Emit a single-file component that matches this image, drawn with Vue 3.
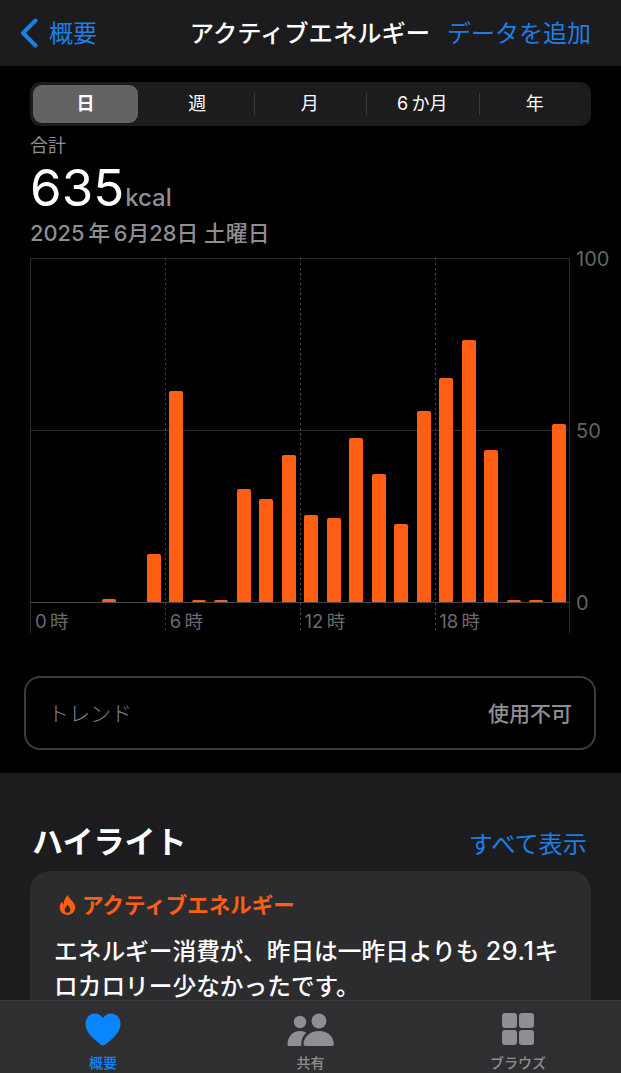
<template>
  <div class="screen">
    <header class="nav">
      <div class="nav_back">
        <svg class="chevron" width="18" height="30" viewBox="0 0 18 30">
          <path d="M15.5 2.5 3 15l12.5 12.5" fill="none" stroke="#1c7fe6" stroke-width="4" stroke-linecap="round" stroke-linejoin="round" />
        </svg>
        <span class="nav_text">概要</span>
      </div>
      <div class="nav_title nav_text">アクティブエネルギー</div>
      <div class="nav_action nav_text">データを追加</div>
    </header>

    <main class="summary">
      <div class="segment">
        <div v-for="(item, index) in ranges" :key="item" class="segment_item" :class="{ active: index === 0, split: index > 1 }">
          {{ item }}
        </div>
      </div>

      <div class="total_label">合計</div>
      <div class="total"><span class="total_num">635</span><span class="total_unit">kcal</span></div>
      <div class="total_date">{{ dateText }}</div>

      <div class="chart">
        <div class="plot">
          <div class="line_top"></div>
          <div class="line_mid"></div>
          <div class="line_base"></div>
          <div class="bars">
            <div v-for="(h, index) in bars" :key="index" class="bar_cell">
              <div v-if="h" class="bar" :style="{ height: h + 'px' }"></div>
            </div>
          </div>
          <div class="hours">
            <div v-for="item in hours" :key="item" class="hour">{{ item }}</div>
          </div>
        </div>
        <div class="axis">
          <span>100</span>
          <span>50</span>
          <span>0</span>
        </div>
      </div>

      <div class="trend">
        <span class="trend_name">トレンド</span>
        <span class="trend_value">使用不可</span>
      </div>
    </main>

    <section class="highlight">
      <div class="highlight_head">
        <h2>ハイライト</h2>
        <span>すべて表示</span>
      </div>
      <div class="card">
        <div class="card_title">
          <svg width="17" height="22" viewBox="0 0 18 22">
            <path fill-rule="evenodd" fill="#ff5f15" d="M9.5 0.5c0.6 3 2.4 4.2 4.6 6.6C16 9.200 17.200 11.200 17.200 13.500 17.200 18.200 13.600 21.500 9 21.500 4.400 21.500 0.800 18.300 0.800 13.700 0.800 11.200 1.800 9.200 3.300 7.400 3.500 8.900 4 9.900 4.900 10.500 5 6.800 6.500 3 9.500 0.500ZM9.100 10.500C8.500 12.200 6 13.700 6 16.200 6 18.100 7.300 19.300 9 19.300 10.700 19.300 12 18.100 12 16.200 12 13.800 10.100 12.600 9.100 10.500Z" />
          </svg>
          <span>アクティブエネルギー</span>
        </div>
        <p>エネルギー消費が、昨日は一昨日よりも <span class="card_num">29.1</span>キロカロリー少なかったです。</p>
      </div>
    </section>

    <nav class="tabs">
      <div class="tab on">
        <svg width="36" height="33" viewBox="0 0 36 33">
          <path fill="#0a84ff" d="M18 32.500C16.800 32.500 15.800 31.700 14 30.300 6.500 24.500 0.500 18.500 0.500 10.800 0.500 4.800 4.700 0.500 10 0.500 13.500 0.500 16.300 2.300 18 5.300 19.700 2.300 22.500 0.500 26 0.500 31.300 0.500 35.500 4.800 35.500 10.800 35.500 18.500 29.500 24.500 22 30.300 20.200 31.700 19.200 32.500 18 32.500Z" />
        </svg>
        <span>概要</span>
      </div>
      <div class="tab">
        <svg width="47" height="33" viewBox="0 0 47 33">
          <circle cx="13" cy="9" r="6.200" fill="#8e8e93" />
          <path fill="#8e8e93" d="M0.500 31.500C0.500 24 5.500 18 13 18 15.500 18 17.700 18.700 19.400 19.800 16.200 22.500 14.200 26.500 14.200 31.500 14.200 32.100 14.300 32.500 14.500 33L2 33C1 33 0.500 32.500 0.500 31.500Z" />
          <circle cx="32" cy="8" r="7.500" fill="#8e8e93" />
          <path fill="#8e8e93" d="M16.500 31C16.500 24 23 18 32 18 41 18 46.800 24 46.800 31 46.800 32.300 46 33 45 33L18.300 33C17.200 33 16.500 32.300 16.500 31Z" />
        </svg>
        <span>共有</span>
      </div>
      <div class="tab">
        <div class="grid_icon">
          <i></i><i></i><i></i><i></i>
        </div>
        <span>ブラウズ</span>
      </div>
    </nav>
  </div>
</template>

<script setup>
const ranges = ['日', '週', '月', '6\u2009か月', '年']
const hours = ['0\u2009時', '6\u2009時', '12\u2009時', '18\u2009時']
const dateText = '2025\u2009年\u20096月28日 土曜日'
// 各時間の棒の高さ(px)
const bars = [0, 0, 0, 3, 0, 48, 211, 2, 2, 113, 103, 147, 87, 84, 164, 128, 78, 191, 224, 262, 152, 2, 2, 178]
</script>

<style>
body {
  background: #000;
}
</style>

<style scoped>
.screen {
  position: relative;
  width: 621px;
  height: 1073px;
  overflow: hidden;
  background: #000;
  color: #fff;
  font-family: Inter, "Noto Sans CJK JP", sans-serif;
}

.nav {
  display: flex;
  align-items: center;
  height: 66px;
  padding: 0 30px 0 20px;
  background: #1c1c1e;
  font-size: 24px;
}

.nav_text {
  margin-bottom: 4px;
}

.nav_back {
  display: flex;
  align-items: center;
  gap: 11px;
  width: 171px;
  color: #1c7fe6;
}

.nav_title {
  width: 259px;
  font-size: 24.300px;
  font-weight: 500;
  white-space: nowrap;
}

.nav_action {
  color: #1c7fe6;
  white-space: nowrap;
}

.summary {
  box-sizing: border-box;
  height: 707px;
  padding: 16px 30px 0;
}

.segment {
  display: flex;
  box-sizing: border-box;
  height: 44px;
  padding: 3px 0 3px 3px;
  border-radius: 11px;
  background: #1c1c1e;
  font-size: 18px;
}

.segment_item {
  position: relative;
  flex: 1;
  line-height: 38px;
  text-align: center;
}

.segment_item.active {
  flex: none;
  width: 105px;
  margin-right: 3px;
  border-radius: 9px;
  background: #636366;
  font-weight: 600;
}

.segment_item.split::before {
  content: "";
  position: absolute;
  left: 0;
  top: 8px;
  height: 22px;
  width: 1px;
  background: #3a3a3c;
}

.total_label {
  margin-top: 9px;
  font-size: 18px;
  line-height: 22px;
  color: #8e8e93;
}

.total {
  display: flex;
  align-items: baseline;
  height: 52px;
  margin-top: 5px;
  line-height: 52px;
}

.total_num {
  font-size: 51px;
}

.total_unit {
  margin-left: 1px;
  font-size: 24px;
  font-weight: 500;
  color: #8e8e93;
}

.total_date {
  margin-top: 4px;
  font-size: 21.800px;
  line-height: 30px;
  font-weight: 500;
  color: #8e8e93;
}

.chart {
  display: flex;
  margin-top: 10px;
}

.plot {
  position: relative;
  box-sizing: border-box;
  width: 540px;
  height: 375px;
  border-left: 1px solid #2e2e30;
  border-right: 1px solid #2e2e30;
}

.line_top,
.line_mid,
.line_base {
  position: absolute;
  left: 0;
  right: 0;
  height: 1px;
  background: #2a2a2c;
}

.line_top {
  top: 0;
}

.line_mid {
  top: 172px;
}

.line_base {
  top: 344px;
  background: #48484a;
}

.bars {
  position: relative;
  display: grid;
  grid-template-columns: repeat(24, 22.500px);
  height: 344px;
  margin-left: -1px;
}

.bar_cell {
  position: relative;
  display: flex;
  align-items: flex-end;
  height: 100%;
  padding-left: 4px;
}

.bar_cell:nth-child(6n + 1)::before {
  content: "";
  position: absolute;
  left: 0;
  top: 0;
  bottom: -31px;
  width: 1px;
  background-image: repeating-linear-gradient(to bottom, #48484a 0 2px, transparent 2px 5px);
}

.bar_cell:first-child::before {
  display: none;
}

.bar {
  width: 14px;
  border-radius: 2px 2px 0 0;
  background: #ff5f15;
}

.hours {
  display: flex;
  margin-left: -1px;
  padding-top: 8px;
}

.hour {
  box-sizing: border-box;
  width: 135px;
  padding-left: 5px;
  font-size: 18.500px;
  line-height: 23px;
  color: #6a6a6e;
}

.axis {
  display: flex;
  flex-direction: column;
  justify-content: space-between;
  height: 366px;
  margin: -10px 0 0 6px;
  font-size: 20px;
  line-height: 22px;
  color: #636366;
}

.trend {
  display: flex;
  align-items: center;
  justify-content: space-between;
  box-sizing: border-box;
  width: 572px;
  height: 74px;
  margin: 43px 0 0 -6px;
  padding: 0 22px 3px 22px;
  border: 2px solid #3c3c3e;
  border-radius: 16px;
}

.trend_name {
  font-size: 21px;
  font-weight: 300;
  color: #85858a;
}

.trend_value {
  font-size: 21px;
  font-weight: 500;
  color: #8e8e93;
}

.highlight {
  box-sizing: border-box;
  height: 300px;
  padding: 0 30px;
  background: #1c1c1e;
}

.highlight_head {
  display: flex;
  align-items: flex-end;
  justify-content: space-between;
  box-sizing: border-box;
  height: 98px;
  padding: 0 4px 0 2px;
}

.highlight_head h2 {
  margin: 0 0 7px;
  font-size: 31px;
  line-height: 44px;
  font-weight: 700;
}

.highlight_head span {
  margin-bottom: 5px;
  font-size: 24.200px;
  line-height: 42px;
  color: #1c7fe6;
}

.card {
  box-sizing: border-box;
  height: 190px;
  padding: 22px 25px;
  border-radius: 20px;
  background: #2c2c2e;
}

.card_title {
  display: flex;
  align-items: center;
  gap: 6px;
  padding-left: 4px;
  font-size: 21.500px;
  line-height: 24px;
  font-weight: 700;
  color: #ff5f15;
}

.card p {
  width: 515px;
  margin: 17px 0 0 -1px;
  font-size: 23.700px;
  line-height: 34.500px;
  font-weight: 500;
}

.card_num {
  font-size: 25px;
  letter-spacing: 0.6px;
}

.tabs {
  position: absolute;
  left: 0;
  right: 0;
  bottom: 0;
  display: flex;
  justify-content: space-between;
  box-sizing: border-box;
  height: 73px;
  padding: 12px 46px 0;
  border-top: 1px solid #3a3a3c;
  background: #2f2f31;
}

.tab {
  display: flex;
  flex-direction: column;
  align-items: center;
  width: 114px;
  font-size: 14px;
  font-weight: 500;
  color: #8e8e93;
}

.tab svg,
.grid_icon {
  height: 33px;
}

.tab span {
  margin-top: 7px;
  line-height: 20px;
}

.tab.on {
  color: #0a84ff;
}

.grid_icon {
  display: grid;
  grid-template-columns: 15px 15px;
  grid-template-rows: 15px 15px;
  gap: 2px;
}

.grid_icon i {
  border-radius: 3px;
  background: #8e8e93;
}
</style>
